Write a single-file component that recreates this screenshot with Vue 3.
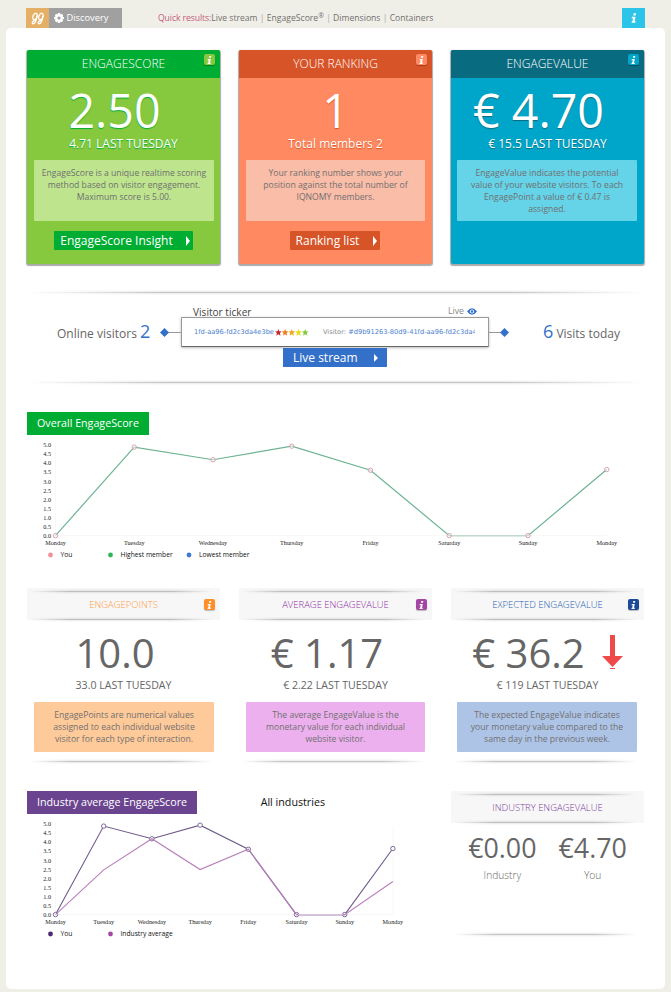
<script setup>
const scoreCards = [
  { key: 'green', title: 'ENGAGESCORE', value: '2.50', shift: 18, sub: '4.71 LAST TUESDAY', lines: ['EngageScore is a unique realtime scoring', 'method based on visitor engagement.', 'Maximum score is 5.00.'], button: 'EngageScore Insight' },
  { key: 'orange', title: 'YOUR RANKING', value: '1', shift: 0, sub: 'Total members 2', lines: ['Your ranking number shows your', 'position against the total number of', 'IQNOMY members.'], button: 'Ranking list' },
  { key: 'blue', title: 'ENGAGEVALUE', value: '€ 4.70', shift: 18, sub: '€ 15.5 LAST TUESDAY', lines: ['EngageValue indicates the potential', 'value of your website visitors. To each', 'EngagePoint a value of € 0.47 is', 'assigned.'] }
]
const pointCards = [
  { key: 'amber', title: 'ENGAGEPOINTS', value: '10.0', sub: '33.0 LAST TUESDAY', lines: ['EngagePoints are numerical values', 'assigned to each individual website', 'visitor for each type of interaction.'] },
  { key: 'violet', title: 'AVERAGE ENGAGEVALUE', value: '€ 1.17', sub: '€ 2.22 LAST TUESDAY', lines: ['The average EngageValue is the', 'monetary value for each individual', 'website visitor.'] },
  { key: 'navy', title: 'EXPECTED ENGAGEVALUE', value: '€ 36.2', arrow: true, sub: '€ 119 LAST TUESDAY', lines: ['The expected EngageValue indicates', 'your monetary value compared to the', 'same day in the previous week.'] }
]
const stars = ['#c5282f', '#ee7d1a', '#f0a818', '#e6de10', '#86c83c']
const days = ['Monday', 'Tuesday', 'Wednesday', 'Thursday', 'Friday', 'Saturday', 'Sunday', 'Monday']
const ticks = ['5.0', '4.5', '4.0', '3.5', '3.0', '2.5', '2.0', '1.5', '1.0', '0.5', '0.0']
const you = [0, 4.89, 4.19, 4.94, 3.61, 0, 0, 3.65]
const average = [0, 2.47, 4.19, 2.49, 3.61, 0, 0, 1.83]
const charts = {
  overall: { step: 78.75, line: '#6db391', ring: '#d9a3ae', legend: [['You', '#ee8f9b', 23.5], ['Highest member', '#2fb457', 83.5], ['Lowest member', '#3f7ad0', 162]] },
  industry: { step: 48.2, line: '#6f5a8c', ring: '#7c6997', legend: [['You', '#4b2a72', 23.5], ['Industry average', '#a447a4', 83.5]] }
}
const x = (c, i) => 28.5 + i * c.step
const y = v => 100.6 - v * 18.1
const points = (c, data) => data.map((v, i) => `${x(c, i)},${y(v)}`).join(' ')
</script>

<template>
  <div class="page">
    <header class="top">
      <div class="logo">
        <svg width="13" height="13" viewBox="0 0 13 13" fill="none" stroke="#fff" stroke-width="1.3" stroke-linecap="round">
          <ellipse cx="4" cy="4.4" rx="2" ry="3.4" transform="rotate(22 4 4.4)" />
          <ellipse cx="9.9" cy="4.4" rx="2" ry="3.4" transform="rotate(22 9.9 4.4)" />
          <path d="M5.9 4.2C5.8 6.6 5 9 4 10.6C3 12.2 1.2 12 1.2 10.7C1.2 9.6 2.4 9 3.8 8.2M11.8 4.2C11.7 6.6 10.9 9 9.9 10.6C8.9 12.2 7.1 12 7.1 10.7C7.1 9.6 8.3 9 9.7 8.2" />
        </svg>
      </div>
      <div class="discovery">
        <svg width="10" height="10" viewBox="-5 -5 10 10">
          <g fill="#fff"><rect v-for="a in [0, 45, 90, 135]" :key="a" x="-1.2" y="-4.9" width="2.4" height="9.8" rx=".5" :transform="`rotate(${a})`" /><circle r="3.7" /></g>
          <circle r="1.6" fill="#a0a0a0" />
        </svg>
        <span>Discovery</span>
      </div>
      <nav class="quick"><b>Quick results:</b>Live stream <i>|</i> EngageScore<sup>®</sup> <i>|</i> Dimensions <i>|</i> Containers</nav>
      <div class="help">
        <svg width="6" height="11" viewBox="0 0 7 12" fill="#fff"><path d="M3.2 0h2.8l-.5 2.4H2.7zM1.1 4h4.2L4.2 9.2h1.2L5 11H.6l.4-1.7h.7l.7-3.6H.8z" /></svg>
      </div>
    </header>

    <main class="panel">
      <section class="cards">
        <article v-for="c in scoreCards" :key="c.key" class="score" :class="c.key">
          <h2>{{ c.title }}</h2>
          <span class="info"><svg width="5" height="8" viewBox="0 0 7 11" fill="#fff"><path d="M3.2 0h2.8l-.5 2.4H2.7zM1.1 4h4.2L4.2 9.2h1.2L5 11H.6l.4-1.7h.7l.7-3.6H.8z" /></svg></span>
          <div class="value" :style="{ marginRight: c.shift + 'px' }">{{ c.value }}</div>
          <div class="sub">{{ c.sub }}</div>
          <p><span v-for="l in c.lines" :key="l">{{ l }}</span></p>
          <a v-if="c.button" class="button">{{ c.button }}<svg width="4" height="10" viewBox="0 0 4 10"><path d="M0 0L4 5L0 10Z" fill="#fff" /></svg></a>
        </article>
      </section>

      <section class="live">
        <div class="rule wide"></div>
        <div class="liverow">
          <div class="online">Online visitors <b>2</b></div>
          <svg class="link" width="21" height="11" viewBox="0 0 21 11"><path d="M8 5.5H21" stroke="#999" /><path d="M4.5 1L9 5.5L4.5 10L0 5.5Z" fill="#3370ca" /></svg>
          <div class="ticker">
            <div class="tickhead"><span>Visitor ticker</span>
              <small>Live <svg width="10" height="7" viewBox="0 0 10 7"><path d="M0 3.5Q5-3 10 3.5Q5 10 0 3.5Z" fill="#3370ca" /><circle cx="5" cy="3.5" r="2.1" fill="#fff" /><circle cx="5" cy="3.5" r="1.2" fill="#3370ca" /></svg></small>
            </div>
            <div class="tickbox"><div class="tape">
              <em>1fd-aa96-fd2c3da4e3be</em>
              <svg width="34" height="7" viewBox="0 0 34 7"><path v-for="(s, i) in stars" :key="s" :fill="s" :transform="`translate(${i * 6.7} 0)`" d="M3.4 0L4.3 2.3L6.8 2.5L4.9 4.1L5.5 6.7L3.4 5.3L1.3 6.7L1.9 4.1L0 2.5L2.5 2.3Z" /></svg>
              <span class="visitor">Visitor: <em>#d9b91263-80d9-41fd-aa96-fd2c3da4</em></span>
            </div></div>
            <a class="button stream">Live stream<svg width="4" height="8" viewBox="0 0 4 8"><path d="M0 0L4 4L0 8Z" fill="#fff" /></svg></a>
          </div>
          <svg class="link" width="21" height="11" viewBox="0 0 21 11"><path d="M0 5.5H12" stroke="#999" /><path d="M15.5 1L20 5.5L15.5 10L11 5.5Z" fill="#3370ca" /></svg>
          <div class="today"><b>6</b> Visits today</div>
        </div>
        <div class="rule wide"></div>
      </section>

      <section class="overall">
        <h3>Overall EngageScore</h3>
        <svg class="chart" width="617" height="127" viewBox="0 0 617 127">
          <path d="M28.5 8V100.5H580" fill="none" stroke="#f8f8f8" />
          <text v-for="(t, i) in ticks" :key="t" class="tick" x="24" :y="12.2 + i * 9.08" text-anchor="end">{{ t }}</text>
          <text v-for="(d, i) in days" :key="i" class="tick" :x="x(charts.overall, i)" y="110" text-anchor="middle">{{ d }}</text>
          <polyline :points="points(charts.overall, you)" fill="none" :stroke="charts.overall.line" stroke-width="1.2" />
          <path d="M424 100.5H500" stroke="#c3d9cd" />
          <circle v-for="(v, i) in you" :key="i" :cx="x(charts.overall, i)" :cy="y(v)" r="2.2" fill="#fff" fill-opacity=".5" :stroke="charts.overall.ring" />
          <g v-for="l in charts.overall.legend" :key="l[0]"><circle :cx="l[2]" cy="120" r="2.4" :fill="l[1]" /><text class="legend" :x="l[2] + 10" y="121.8">{{ l[0] }}</text></g>
        </svg>
      </section>

      <section class="cards points">
        <article v-for="c in pointCards" :key="c.key" class="plain" :class="c.key">
          <header><div class="rule"></div><h2>{{ c.title }}</h2><div class="rule"></div></header>
          <span class="info"><svg width="5" height="8" viewBox="0 0 7 11" fill="#fff"><path d="M3.2 0h2.8l-.5 2.4H2.7zM1.1 4h4.2L4.2 9.2h1.2L5 11H.6l.4-1.7h.7l.7-3.6H.8z" /></svg></span>
          <div class="amount" :class="{ trend: c.arrow }">{{ c.value }}<svg v-if="c.arrow" class="arrow" width="21" height="34" viewBox="0 0 21 34" fill="#ef4a4a"><path d="M8 0h5v21h8L10.5 32L0 21h8zM8 33h5v1H8z" /></svg></div>
          <div class="sub">{{ c.sub }}</div>
          <p><span v-for="l in c.lines" :key="l">{{ l }}</span></p>
          <div class="rule foot"></div>
        </article>
      </section>

      <section class="bottom">
        <div class="industry">
          <div class="heading"><h3>Industry average EngageScore</h3><span>All industries</span></div>
          <svg class="chart" width="405" height="127" viewBox="0 0 405 127">
            <path d="M28.5 8V100.5H366V12" fill="none" stroke="#f8f8f8" />
            <text v-for="(t, i) in ticks" :key="t" class="tick" x="24" :y="12.2 + i * 9.08" text-anchor="end">{{ t }}</text>
            <text v-for="(d, i) in days" :key="i" class="tick" :x="x(charts.industry, i)" y="110" text-anchor="middle">{{ d }}</text>
            <polyline :points="points(charts.industry, you)" fill="none" :stroke="charts.industry.line" stroke-width="1.1" />
            <circle v-for="(v, i) in you" :key="i" :cx="x(charts.industry, i)" :cy="y(v)" r="2.2" fill="#fff" :stroke="charts.industry.ring" />
            <polyline :points="points(charts.industry, average)" fill="none" stroke="#b97fba" stroke-width="1.1" />
            <path d="M271 100.5H316" stroke="#dac2df" />
            <g v-for="l in charts.industry.legend" :key="l[0]"><circle :cx="l[2]" cy="120" r="2.4" :fill="l[1]" /><text class="legend" :x="l[2] + 10" y="121.8">{{ l[0] }}</text></g>
          </svg>
        </div>
        <article class="plain compare">
          <header><div class="rule"></div><h2>INDUSTRY ENGAGEVALUE</h2><div class="rule"></div></header>
          <div class="pair">
            <div><strong>€0.00</strong><span>Industry</span></div>
            <div><strong>€4.70</strong><span>You</span></div>
          </div>
          <div class="rule foot"></div>
        </article>
      </section>
    </main>
  </div>
</template>

<style>
body { background: #f0efe7; }
</style>

<style scoped>
* { box-sizing: border-box; }
.page { height: 992px; padding: 8px 6px 3px; background: #f0efe7; font-family: "Open Sans", sans-serif; color: #666; white-space: nowrap; overflow: hidden; }
h2, h3, p { margin: 0; font-weight: 400; }
b, i, em { font-weight: 400; font-style: normal; }
svg { display: block; flex: none; }
.top { display: flex; height: 20px; padding: 0 20px; }
.logo { width: 23px; background: #e5b065; display: flex; align-items: center; justify-content: center; }
.discovery { width: 73px; background: #a0a0a0; color: #fff; font-size: 9.3px; line-height: 18px; display: flex; align-items: center; padding-left: 5px; gap: 2.5px; }
.discovery span { padding-bottom: 1px; }
.quick { margin-left: 36px; font-size: 8.62px; line-height: 21px; color: #707070; }
.quick b { color: #c35c7c; letter-spacing: -.08px; }
.quick i { color: #aaa; }
.quick sup { font-size: 6.8px; line-height: 0; vertical-align: 3.5px; }
.help { margin-left: auto; width: 23px; background: #2cc4e8; display: flex; align-items: center; justify-content: center; }
.panel { height: 961px; background: #fff; border-radius: 5px; padding: 22px 21px 0; }
.cards { display: grid; grid-template-columns: repeat(3, 193px); gap: 19px; }
.score { position: relative; height: 214px; border-radius: 2px; box-shadow: 0 1px 1px 1px #aaa; color: #fff; text-align: center; }
.score h2 { height: 28px; line-height: 27px; font-size: 12px; font-weight: 300; border-radius: 2px 2px 0 0; }
.info { position: absolute; right: 5px; top: 4px; width: 11px; height: 11px; border-radius: 2px; display: flex; align-items: center; justify-content: center; box-shadow: 0 1px 1px rgba(0, 0, 0, .25); }
.value { height: 60px; font-size: 46.6px; line-height: 57px; padding-top: 4px; }
.score .sub { font-size: 12px; line-height: 12px; height: 10px; }
p { width: 180px; margin-left: 7px; color: #707070; font-size: 8.64px; line-height: 12px; border-radius: 1px; text-align: center; }
p span { display: block; }
.score p { margin-top: 12px; height: 61px; padding: 7px 0 0; }
.green { background: #86c83e; }
.green h2, .green .button { background: #00ad33; }
.green .info { background: #86c83e; }
.green .value, .green .sub { text-shadow: 0 1px 1px #00ad33; }
.green p { background: #bee58e; }
.orange { background: #ff8960; }
.orange h2, .orange .button { background: #d75428; }
.orange .info { background: #ff8960; }
.orange .value, .orange .sub { text-shadow: 0 1px 1px #d75428; }
.orange p { background: #fabda8; width: 179px; }
.blue { background: #00a6c9; }
.blue h2 { background: #096b7f; }
.blue .info { background: #00a6c9; }
.blue .value, .blue .sub { text-shadow: 0 1px 1px #096b7f; }
.blue p { background: #65d3e8; margin-left: 6px; }
.button { display: inline-flex; align-items: center; height: 19px; margin-top: 10px; padding: 0 3px 0 6px; border-radius: 1px; color: #fff; font-size: 12px; line-height: 19px; gap: 13px; }
.orange .button { gap: 14px; margin-right: 1px; }
.rule { height: 5px; background: linear-gradient(#0000, #0001 30%, #0000003a 50%, #0001 70%, #0000); -webkit-mask-image: linear-gradient(90deg, transparent, #000 22%, #000 78%, transparent); mask-image: linear-gradient(90deg, transparent, #000 22%, #000 78%, transparent); }
.live { margin-top: 26px; height: 95px; display: flex; flex-direction: column; }
.liverow { flex: 1; display: flex; align-items: flex-start; }
.online { width: 133px; padding-left: 30px; }
.online, .today { margin-top: 26px; font-size: 12px; line-height: 26px; }
.online b, .today b { font-size: 18px; color: #3370ca; line-height: 20px; }
.today { padding-left: 33px; }
.link { margin-top: 32px; }
.ticker { width: 308px; padding-top: 10px; text-align: center; }
.tickhead { height: 12px; display: flex; justify-content: space-between; padding: 0 12px; font-size: 10.1px; line-height: 14px; color: #444; }
.tickhead small { display: flex; align-items: center; gap: 3px; font-size: 8.7px; line-height: 12px; color: #888; height: 12px; }
.tickbox { height: 30px; border: 1px solid #999; border-bottom-color: #666; border-radius: 1px; box-shadow: 0 1px 3px #bbb; padding: 0 13px 0 12px; }
.tape { height: 28px; display: flex; align-items: center; overflow: hidden; font: 6.65px/28px "DejaVu Sans", sans-serif; gap: 1.5px; }
.tape em { color: #4a80cf; }
.visitor { margin-left: 12px; color: #888; }
.button.stream { display: flex; margin: 1px auto 0; width: 104px; padding: 0 9px 0 10px; justify-content: space-between; background: #3370ca; border-radius: 0; }
.overall { margin-top: 27px; }
h3 { display: inline-block; height: 23px; padding: 0 10px; background: #00ad33; color: #fff; font-size: 10.7px; line-height: 22px; }
.overall h3, .industry h3 { display: block; width: fit-content; }
.chart { overflow: visible; }
.tick { font: 6.2px "Liberation Serif", serif; fill: #222; }
.legend { font: 6.7px "Open Sans", sans-serif; fill: #111; }
.points { margin-top: 26px; }
.plain { position: relative; text-align: center; }
.plain header { height: 32px; background: #f7f7f7; }
.plain .rule { margin: 0 8px 0 3px; }
.plain header .rule { position: relative; top: 1px; }
.plain header h2 { height: 23px; line-height: 24px; font-size: 9.45px; font-weight: 300; }
.plain .info { top: 11px; }
.amount { position: relative; margin: 4px 17px 0 0; height: 56px; font-size: 40px; line-height: 58px; }
.amount.trend { margin-right: 38px; }
.arrow { position: absolute; left: 151px; top: 11px; }
.plain .sub { font-size: 10.6px; line-height: 10px; }
.plain p { margin-top: 12px; height: 50px; padding: 7px 0 0; }
.amber h2 { color: #ff9c42; }
.amber .info { background: #fe8e28; }
.amber p { background: #ffca9a; }
.violet h2 { color: #922da8; }
.violet .info { background: #a447a4; }
.violet p { background: #ecb0ee; width: 179px; }
.navy h2 { color: #2762b3; }
.navy .info { background: #1b4b96; }
.navy p { background: #aec4e7; margin-left: 6px; }
.plain .foot { margin-top: 7px; }
.bottom { margin-top: 27px; display: flex; justify-content: space-between; }
.industry { width: 405px; }
.heading { display: flex; justify-content: space-between; padding-right: 107px; font-size: 10.7px; line-height: 22px; color: #111; }
.industry h3 { background: #6a448f; }
.compare { width: 193px; }
.compare h2 { color: #7d40a0; }
.pair { display: flex; justify-content: center; gap: 22px; height: 109px; padding-top: 9px; }
.pair strong, .pair span { display: block; }
.pair strong { font-size: 26.8px; line-height: 32px; font-weight: 400; }
.pair span { font-size: 10.2px; font-weight: 300; line-height: 23px; }
.compare .foot { margin-top: 0; }
</style>
